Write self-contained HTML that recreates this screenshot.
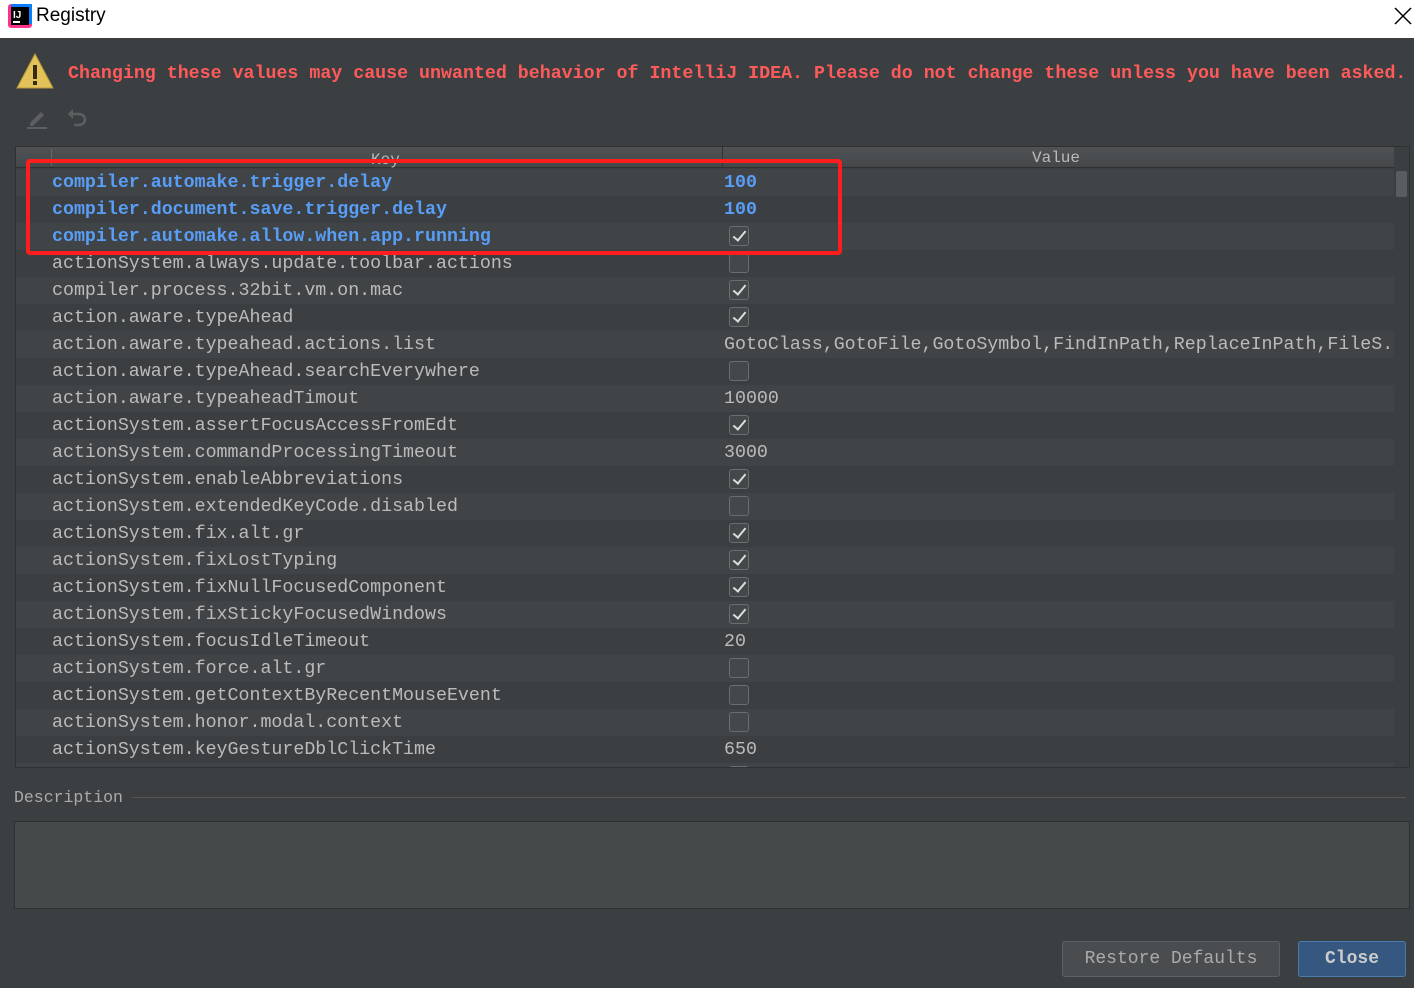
<!DOCTYPE html>
<html><head><meta charset="utf-8"><style>
*{margin:0;padding:0;box-sizing:border-box}
body{width:1414px;height:988px;background:#3c3f41;position:relative;overflow:hidden;font-family:"Liberation Mono",monospace}
.title{position:absolute;left:0;top:0;width:1414px;height:38px;background:#fff}
.title span{position:absolute;left:36px;top:5px;font:19px "Liberation Sans",sans-serif;color:#000}
.warn{position:absolute;left:68px;top:64px;font-weight:bold;font-size:18.3px;color:#ff5a5a;white-space:nowrap}
.tbl{position:absolute;left:15px;top:146px;width:1395px;height:622px;background:#3c3f41;overflow:hidden;border:1px solid #2f3133}
.hdr{position:absolute;left:0;top:0;width:1378px;height:21px;background:linear-gradient(#4f5254,#45484a);border-bottom:1px solid #2e3032;color:#bbb;font-size:16px}
.row{position:absolute;left:0;width:1378px;height:27px;color:#bbbbbb;font-size:18.3px;white-space:nowrap}
.row.a{background:#414446}
.row .k{position:absolute;left:36px;top:4px}
.row .v{position:absolute;left:708px;top:4px}
.b{color:#589df6;font-weight:bold}
.cb{position:absolute;left:713px;top:3px;width:20px;height:20px;border:1px solid #6b6e70;border-radius:3px;background:#43494a}
.cb.c::after{content:"";position:absolute;left:6px;top:1px;width:5px;height:11px;border:solid #ddd;border-width:0 2px 2px 0;transform:rotate(40deg)}
</style></head><body>
<div class="title">
<svg style="position:absolute;left:8px;top:4px" width="24" height="24"><rect x="0" y="0" width="24" height="24" rx="3" fill="#ff318c"/><rect x="3" y="0" width="21" height="20" fill="#087cfa"/><rect x="3" y="3" width="18" height="18" fill="#000"/><text x="5" y="14" fill="#fff" font-size="10" font-family="Liberation Sans" font-weight="bold">IJ</text><rect x="5" y="17" width="7" height="2" fill="#fff"/></svg>
<span>Registry</span>
<svg style="position:absolute;left:1394px;top:7px" width="18" height="18"><path d="M1 1L17 17M17 1L1 17" stroke="#000" stroke-width="1.5"/></svg>
</div>
<svg style="position:absolute;left:16px;top:52px" width="40" height="40"><path d="M19 2L37 36H1Z" fill="#e4c25a" stroke="#b89a3a"/><rect x="17" y="13" width="4" height="14" fill="#3a2a10"/><rect x="17" y="29" width="4" height="4" fill="#3a2a10"/></svg>
<div class="warn">Changing these values may cause unwanted behavior of IntelliJ IDEA. Please do not change these unless you have been asked.</div>
<svg style="position:absolute;left:25px;top:108px" width="24" height="22"><path d="M5 15L16 4L19 7L8 18H5Z" fill="#5c5f61"/><rect x="2" y="19" width="20" height="2" fill="#5c5f61"/></svg>
<svg style="position:absolute;left:66px;top:108px" width="22" height="22"><path d="M6 6H13A6 5.5 0 0 1 13 17H8" fill="none" stroke="#5c5f61" stroke-width="2.5"/><path d="M2 6L7 1V11Z" fill="#5c5f61"/></svg>
<div class="tbl">
<div class="hdr"><div style="position:absolute;left:35px;top:2px;width:1px;height:17px;background:#666"></div><div style="position:absolute;left:706px;top:0;width:1px;height:21px;background:#333"></div><span style="position:absolute;left:355px;top:4px">Key</span><span style="position:absolute;left:1016px;top:2px">Value</span></div>
<div style="position:absolute;left:1380px;top:24px;width:11px;height:26px;background:#5a5d5f;border-radius:2px"></div>
<div class="row a" style="top:22px"><span class="k b">compiler.automake.trigger.delay</span><span class="v b">100</span></div>
<div class="row" style="top:49px"><span class="k b">compiler.document.save.trigger.delay</span><span class="v b">100</span></div>
<div class="row a" style="top:76px"><span class="k b">compiler.automake.allow.when.app.running</span><span class="cb c"></span></div>
<div class="row" style="top:103px"><span class="k">actionSystem.always.update.toolbar.actions</span><span class="cb"></span></div>
<div class="row a" style="top:130px"><span class="k">compiler.process.32bit.vm.on.mac</span><span class="cb c"></span></div>
<div class="row" style="top:157px"><span class="k">action.aware.typeAhead</span><span class="cb c"></span></div>
<div class="row a" style="top:184px"><span class="k">action.aware.typeahead.actions.list</span><span class="v">GotoClass,GotoFile,GotoSymbol,FindInPath,ReplaceInPath,FileS.</span></div>
<div class="row" style="top:211px"><span class="k">action.aware.typeAhead.searchEverywhere</span><span class="cb"></span></div>
<div class="row a" style="top:238px"><span class="k">action.aware.typeaheadTimout</span><span class="v">10000</span></div>
<div class="row" style="top:265px"><span class="k">actionSystem.assertFocusAccessFromEdt</span><span class="cb c"></span></div>
<div class="row a" style="top:292px"><span class="k">actionSystem.commandProcessingTimeout</span><span class="v">3000</span></div>
<div class="row" style="top:319px"><span class="k">actionSystem.enableAbbreviations</span><span class="cb c"></span></div>
<div class="row a" style="top:346px"><span class="k">actionSystem.extendedKeyCode.disabled</span><span class="cb"></span></div>
<div class="row" style="top:373px"><span class="k">actionSystem.fix.alt.gr</span><span class="cb c"></span></div>
<div class="row a" style="top:400px"><span class="k">actionSystem.fixLostTyping</span><span class="cb c"></span></div>
<div class="row" style="top:427px"><span class="k">actionSystem.fixNullFocusedComponent</span><span class="cb c"></span></div>
<div class="row a" style="top:454px"><span class="k">actionSystem.fixStickyFocusedWindows</span><span class="cb c"></span></div>
<div class="row" style="top:481px"><span class="k">actionSystem.focusIdleTimeout</span><span class="v">20</span></div>
<div class="row a" style="top:508px"><span class="k">actionSystem.force.alt.gr</span><span class="cb"></span></div>
<div class="row" style="top:535px"><span class="k">actionSystem.getContextByRecentMouseEvent</span><span class="cb"></span></div>
<div class="row a" style="top:562px"><span class="k">actionSystem.honor.modal.context</span><span class="cb"></span></div>
<div class="row" style="top:589px"><span class="k">actionSystem.keyGestureDblClickTime</span><span class="v">650</span></div>
<div class="row a" style="top:616px"><span class="cb"></span></div>
</div>
<div style="position:absolute;left:26px;top:159px;width:816px;height:96px;border:4px solid #ff1d1d;border-radius:4px"></div>
<div style="position:absolute;left:14px;top:788px;color:#aaa;font-size:16.5px">Description</div>
<div style="position:absolute;left:132px;top:797px;width:1274px;height:1px;background:#555"></div>
<div style="position:absolute;left:14px;top:821px;width:1396px;height:88px;background:#45494a;border:1px solid #2e3032"></div>
<div style="position:absolute;left:1062px;top:941px;width:218px;height:36px;border:1px solid #5e6163;border-radius:3px;background:#4a4d4f;color:#aaa;font-size:18px;text-align:center;line-height:34px">Restore Defaults</div>
<div style="position:absolute;left:1298px;top:941px;width:108px;height:36px;border:1px solid #4a7bb0;border-radius:3px;background:#365880;color:#ccc;font-size:18px;font-weight:bold;text-align:center;line-height:34px">Close</div>
</body></html>
